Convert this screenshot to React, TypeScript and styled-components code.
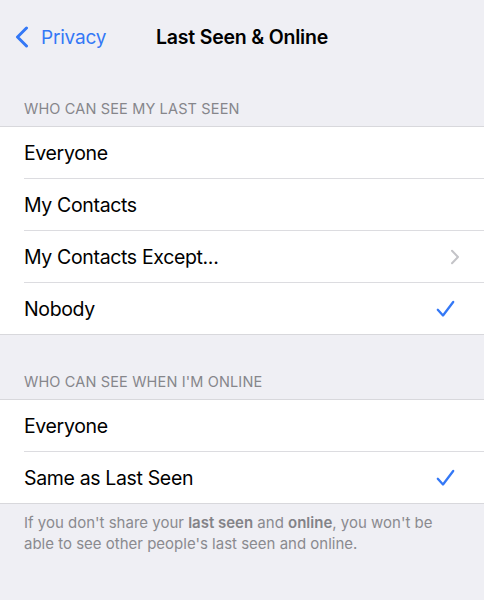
import React from "react";
import styled, { createGlobalStyle } from "styled-components";

const GlobalStyle = createGlobalStyle`
  html, body {
    margin: 0;
    padding: 0;
    background: #efeff4;
    font-family: "Inter", "Roboto", "Liberation Sans", sans-serif;
    -webkit-font-smoothing: antialiased;
  }
`;

const Page = styled.div`
  width: 484px;
  min-height: 600px;
  background: #efeff4;
`;

const NavBar = styled.div`
  height: 62px;
  box-sizing: border-box;
  padding-top: 12px;
  display: grid;
  grid-template-columns: 1fr auto 1fr;
  align-items: start;
`;

const NavInner = styled.div`
  height: 50px;
  display: flex;
  align-items: center;
`;

const BackButton = styled(NavInner)`
  padding-left: 15px;
  gap: 12px;
  color: #3478f6;
  font-size: 19px;
  letter-spacing: -0.2px;
`;

const Title = styled(NavInner)`
  font-size: 19.5px;
  font-weight: 600;
  color: #000;
  letter-spacing: -0.2px;
`;

const SectionHeader = styled.div`
  padding: 38px 24px 8px;
  font-size: 14.5px;
  line-height: 18px;
  color: #86868b;
  text-transform: uppercase;
  letter-spacing: 0.15px;
`;

const Group = styled.div`
  background: #fff;
  border-top: 1px solid #d8d8dc;
  border-bottom: 1px solid #d8d8dc;
`;

const Row = styled.div<{ $last?: boolean }>`
  margin-left: 24px;
  padding-right: 24px;
  height: 51px;
  display: flex;
  align-items: center;
  justify-content: space-between;
  border-bottom: ${(p) => (p.$last ? "none" : "1px solid #dcdce0")};
`;

const RowLabel = styled.span`
  font-size: 19.5px;
  color: #000;
  letter-spacing: -0.35px;
`;

const Accessory = styled.span<{ $kind: "check" | "chevron" }>`
  display: flex;
  align-items: center;
  justify-content: ${(p) => (p.$kind === "check" ? "center" : "flex-end")};
  width: 22px;
  margin-right: ${(p) => (p.$kind === "check" ? "4px" : "0")};
`;

const Footer = styled.p`
  margin: 0;
  padding: 8px 24px 0;
  font-size: 15px;
  line-height: 21px;
  color: #8a8a8f;
  b {
    font-weight: 600;
    color: #838388;
  }
`;

const BackChevron = () => (
  <svg width="14" height="22" viewBox="0 0 14 22">
    <path d="M11.5 2 L2.5 11 L11.5 20" fill="none" stroke="#3478f6" strokeWidth="3" strokeLinecap="round" strokeLinejoin="round" />
  </svg>
);

const Check = () => (
  <svg width="19" height="18" viewBox="0 0 19 18">
    <path d="M1.8 9.8 L7 15.5 L17.2 2" fill="none" stroke="#3478f6" strokeWidth="2.3" strokeLinecap="round" strokeLinejoin="round" />
  </svg>
);

const Chevron = () => (
  <svg width="10" height="16" viewBox="0 0 10 16">
    <path d="M2 1.8 L8 8 L2 14.2" fill="none" stroke="#c4c4c8" strokeWidth="2" strokeLinecap="round" strokeLinejoin="round" />
  </svg>
);

type Item = { label: string; accessory?: "check" | "chevron" };

const Section = ({ title, items }: { title: string; items: Item[] }) => (
  <>
    <SectionHeader>{title}</SectionHeader>
    <Group>
      {items.map((it, i) => (
        <Row key={it.label} $last={i === items.length - 1}>
          <RowLabel>{it.label}</RowLabel>
          {it.accessory && (
            <Accessory $kind={it.accessory}>
              {it.accessory === "check" ? <Check /> : <Chevron />}
            </Accessory>
          )}
        </Row>
      ))}
    </Group>
  </>
);

export default function App() {
  return (
    <Page>
      <GlobalStyle />
      <NavBar>
        <BackButton>
          <BackChevron />
          <span>Privacy</span>
        </BackButton>
        <Title>Last Seen &amp; Online</Title>
        <div />
      </NavBar>
      <Section
        title="Who can see my last seen"
        items={[
          { label: "Everyone" },
          { label: "My Contacts" },
          { label: "My Contacts Except...", accessory: "chevron" },
          { label: "Nobody", accessory: "check" },
        ]}
      />
      <Section
        title="Who can see when I'm online"
        items={[{ label: "Everyone" }, { label: "Same as Last Seen", accessory: "check" }]}
      />
      <Footer>
        If you don't share your <b>last seen</b> and <b>online</b>, you won't be
        <br />
        able to see other people's last seen and online.
      </Footer>
    </Page>
  );
}
